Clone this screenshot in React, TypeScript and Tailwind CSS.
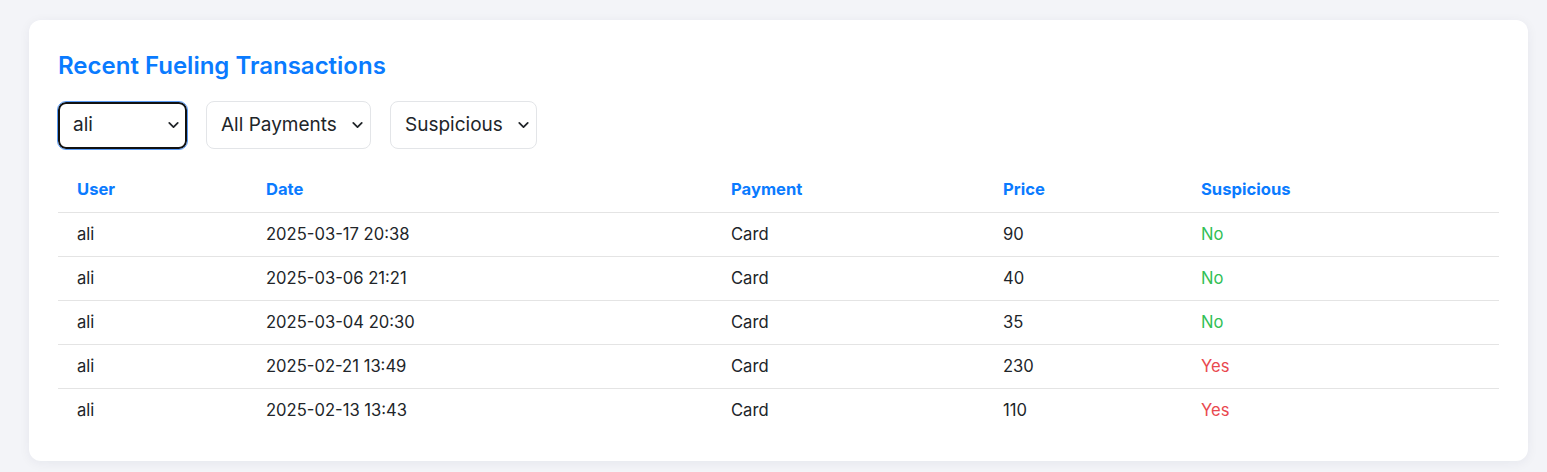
import { ChevronDown } from "lucide-react";

type Tx = {
  user: string;
  date: string;
  payment: string;
  price: number;
  suspicious: boolean;
};

const rows: Tx[] = [
  { user: "ali", date: "2025-03-17 20:38", payment: "Card", price: 90, suspicious: false },
  { user: "ali", date: "2025-03-06 21:21", payment: "Card", price: 40, suspicious: false },
  { user: "ali", date: "2025-03-04 20:30", payment: "Card", price: 35, suspicious: false },
  { user: "ali", date: "2025-02-21 13:49", payment: "Card", price: 230, suspicious: true },
  { user: "ali", date: "2025-02-13 13:43", payment: "Card", price: 110, suspicious: true },
];

function Filter({
  value,
  options,
  width,
  focused,
}: {
  value: string;
  options: string[];
  width: string;
  focused?: boolean;
}) {
  return (
    <div className={`relative ${width}`}>
      <select
        defaultValue={value}
        className={
          focused
            ? "h-[47px] w-full appearance-none rounded-lg border-2 border-[#111] bg-white pl-[13px] text-[19px] text-[#212529] outline outline-[1.5px] outline-offset-0 outline-[#5b9cf6]"
            : "h-[48px] w-full appearance-none rounded-lg border border-[#e3e5e8] bg-white pl-[14px] text-[19px] text-[#212529]"
        }
      >
        {options.map((o) => (
          <option key={o}>{o}</option>
        ))}
      </select>
      <ChevronDown
        size={17}
        strokeWidth={2.5}
        className="pointer-events-none absolute right-[5px] top-1/2 -translate-y-1/2 text-[#212529]"
      />
    </div>
  );
}

export default function App() {
  return (
    <div
      className="min-h-[472px] bg-[#f3f4f8] pb-[11px] pl-[29px] pr-[19px] pt-[20px]"
      style={{ fontFamily: "Inter, 'Noto Sans', sans-serif" }}
    >
      <div className="rounded-xl bg-white px-[29px] pb-[29px] pt-[30px] shadow-[0_2px_12px_rgba(20,30,60,0.06)]">
        <h2 className="text-[24px] font-semibold leading-8 text-[#0a7bff]">
          Recent Fueling Transactions
        </h2>
        <div className="mt-[19px] flex items-center gap-[19px]">
          <Filter value="ali" options={["ali", "All Users"]} width="w-[129px]" focused />
          <Filter value="All Payments" options={["All Payments", "Card", "Cash"]} width="w-[165px]" />
          <Filter value="Suspicious" options={["Suspicious", "All", "Normal"]} width="w-[147px]" />
        </div>
        <table className="mt-[19px] w-full border-collapse text-left text-[16.6px] text-[#212529]">
          <thead>
            <tr className="border-b border-[#e4e4e4]">
              <th className="h-[44px] w-[189px] pl-[19px] font-bold text-[#0a7bff]">User</th>
              <th className="h-[44px] w-[465px] pl-[19px] font-bold text-[#0a7bff]">Date</th>
              <th className="h-[44px] w-[272px] pl-[19px] font-bold text-[#0a7bff]">Payment</th>
              <th className="h-[44px] w-[198px] pl-[19px] font-bold text-[#0a7bff]">Price</th>
              <th className="h-[44px] pl-[19px] font-bold text-[#0a7bff]">Suspicious</th>
            </tr>
          </thead>
          <tbody>
            {rows.map((r, i) => (
              <tr
                key={r.date}
                className={i < rows.length - 1 ? "border-b border-[#e4e4e4]" : ""}
              >
                <td className="h-[44px] pl-[19px]">{r.user}</td>
                <td className="h-[44px] pl-[19px]">{r.date}</td>
                <td className="h-[44px] pl-[19px]">{r.payment}</td>
                <td className="h-[44px] pl-[19px]">{r.price}</td>
                <td
                  className={
                    r.suspicious
                      ? "h-[44px] pl-[19px] text-[#e9494f]"
                      : "h-[44px] pl-[19px] text-[#33bf56]"
                  }
                >
                  {r.suspicious ? "Yes" : "No"}
                </td>
              </tr>
            ))}
          </tbody>
        </table>
      </div>
    </div>
  );
}
